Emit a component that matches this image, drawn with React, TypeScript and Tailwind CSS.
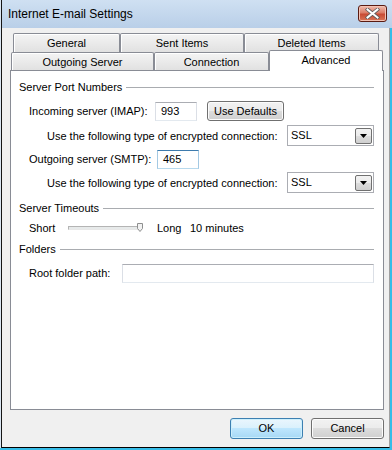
import React from "react";

const btnGray =
  "border border-[#707070] rounded-[3px] bg-[linear-gradient(#f2f2f2,#ebebeb_50%,#dddddd_50%,#cfcfcf)] shadow-[inset_0_0_0_1px_#fcfcfc] flex items-center justify-center";

const tabIdle =
  "h-full border border-b-0 border-[#898c95] rounded-t-[2px] bg-[linear-gradient(#f4f4f4,#e1e1e1)] shadow-[inset_1px_1px_0_#fff] flex justify-center";

function GroupHeader({ title, className }: { title: string; className: string }) {
  return (
    <div className={"flex items-center h-[16px] pl-[8px] pr-[9px] " + className}>
      <span>{title}</span>
      <div className="flex-1 ml-[4px] h-px bg-[#a9acb0]" />
    </div>
  );
}

function Combo() {
  return (
    <div className="w-[87px] h-[21px] border border-[#abadb3] bg-white flex items-center pl-[3px] pr-[1px]">
      <span className="flex-1">SSL</span>
      <div className="w-[17px] h-[16px] border border-[#707070] rounded-[2px] bg-[linear-gradient(#f2f2f2,#ebebeb_50%,#dddddd_50%,#cfcfcf)] flex items-center justify-center">
        <svg width="7" height="4" viewBox="0 0 7 4">
          <polygon points="0,0 7,0 3.5,4" fill="#000" />
        </svg>
      </div>
    </div>
  );
}

export default function App() {
  return (
    <div
      className="w-[392px] h-[450px] flex flex-col bg-[#dbe6f2] pl-px border-b-2 border-[#36bde8] text-[11px] text-black overflow-hidden"
      style={{ fontFamily: '"Liberation Sans", Arial, sans-serif' }}
    >
      <div className="flex-1 flex flex-col border-l border-[#151515]">
        {/* title bar */}
        <div className="h-[28px] flex items-start justify-between pl-[6px] pr-[5px] bg-[linear-gradient(#cfe0f2,#b9cfe8)]">
          <span className="mt-[5px] text-[12px]">Internet E-mail Settings</span>
          <div className="mt-[5px] w-[29px] h-[17px] rounded-[3px] border border-[#5a1b12] bg-[linear-gradient(#efbcae,#dc7d68_45%,#c94b34_55%,#da7658)] shadow-[inset_0_0_0_1px_#f2c2b4] flex items-center justify-center">
            <svg width="15" height="11" viewBox="0 0 15 11">
              <path d="M2.5 1.5 L12.5 9.5 M12.5 1.5 L2.5 9.5" stroke="#5b5b5b" strokeWidth="3.6" strokeLinecap="square" />
              <path d="M2.5 1.5 L12.5 9.5 M12.5 1.5 L2.5 9.5" stroke="#fff" strokeWidth="2" strokeLinecap="square" />
            </svg>
          </div>
        </div>

        <div className="flex-1 flex border-r-[3px] border-[#36bde8]">
          <div className="flex-1 flex flex-col bg-[#f0f0f0] border-r border-[#a0a0a0] border-b border-b-black pt-[5px] pl-[8px] pr-[5px]">
            {/* tab rows */}
            <div className="flex h-[19px] pl-[3px]">
              <div className={tabIdle + " w-[107px] pt-px"}>General</div>
              <div className={tabIdle + " w-[124px] pt-px"}>Sent Items</div>
              <div className={tabIdle + " w-[135px] pt-px"}>Deleted Items</div>
            </div>
            <div className="flex h-[18px] pl-px">
              <div className={tabIdle + " w-[143px] pt-px"}>Outgoing Server</div>
              <div className={tabIdle + " w-[115px] pt-px"}>Connection</div>
              <div className="relative z-10 self-start -mt-[2px] h-[21px] w-[114px] border border-b-0 border-[#898c95] rounded-t-[2px] bg-white flex justify-center pt-px">
                Advanced
              </div>
            </div>

            {/* panel */}
            <div className="w-[374px] h-[340px] border border-[#898c95] bg-white flex flex-col">
              <GroupHeader title="Server Port Numbers" className="mt-[8px]" />

              <div className="flex items-center h-[20px] mt-[6px] pl-[18px]">
                <span className="w-[126px]">Incoming server (IMAP):</span>
                <div className="w-[42px] h-[19px] border border-[#abadb3] border-x-[#dbdfe6] border-b-[#e3e9ef] flex items-center pl-[5px]">
                  993
                </div>
                <div className={btnGray + " ml-[10px] w-[77px] h-[20px]"}>Use Defaults</div>
              </div>

              <div className="flex items-center h-[21px] mt-[4px] pl-[36px]">
                <span className="w-[240px] pt-[2px]">Use the following type of encrypted connection:</span>
                <Combo />
              </div>

              <div className="flex items-center h-[20px] mt-[3px] pl-[18px]">
                <span className="w-[128px]">Outgoing server (SMTP):</span>
                <div className="w-[42px] h-[19px] border border-[#3d7bad] border-x-[#a4c9e3] border-b-[#b7d9ed] flex items-center pl-[5px]">
                  465
                </div>
              </div>

              <div className="flex items-center h-[21px] mt-[3px] pl-[36px]">
                <span className="w-[240px] pt-[2px]">Use the following type of encrypted connection:</span>
                <Combo />
              </div>

              <GroupHeader title="Server Timeouts" className="mt-[7px]" />

              <div className="flex items-center h-[16px] mt-[4px] pl-[18px]">
                <span className="w-[39px]">Short</span>
                <div className="relative w-[76px] h-[10px] flex items-center">
                  <div className="w-[72px] h-[4px] border border-[#b4b4b4] border-b-[#e8e8e8] bg-[#e7eaea]" />
                  <svg className="absolute right-[1px] top-0" width="6" height="9" viewBox="0 0 6 9">
                    <path d="M0.5 0.5 H5.5 V5.5 L3 8.5 L0.5 5.5 Z" fill="#f2f2f2" stroke="#8e8f8f" />
                  </svg>
                </div>
                <span className="ml-[13px] w-[33px]">Long</span>
                <span>10 minutes</span>
              </div>

              <GroupHeader title="Folders" className="mt-[5px]" />

              <div className="flex items-center h-[19px] mt-[7px] pl-[18px]">
                <span className="w-[93px]">Root folder path:</span>
                <div className="w-[252px] h-[19px] border border-[#abadb3] border-x-[#dbdfe6] border-b-[#e3e9ef]" />
              </div>
            </div>

            {/* dialog buttons */}
            <div className="flex justify-end gap-[8px] mt-[8px]">
              <div className="w-[73px] h-[21px] rounded-[3px] border border-[#3c7fb1] bg-[linear-gradient(#eaf6fd,#d9f0fc_50%,#bee6fd_50%,#a7d9f5)] shadow-[inset_0_0_0_1px_#cdeffc] flex items-center justify-center">
                OK
              </div>
              <div className={btnGray + " w-[73px] h-[21px]"}>Cancel</div>
            </div>
          </div>
        </div>
      </div>
    </div>
  );
}
